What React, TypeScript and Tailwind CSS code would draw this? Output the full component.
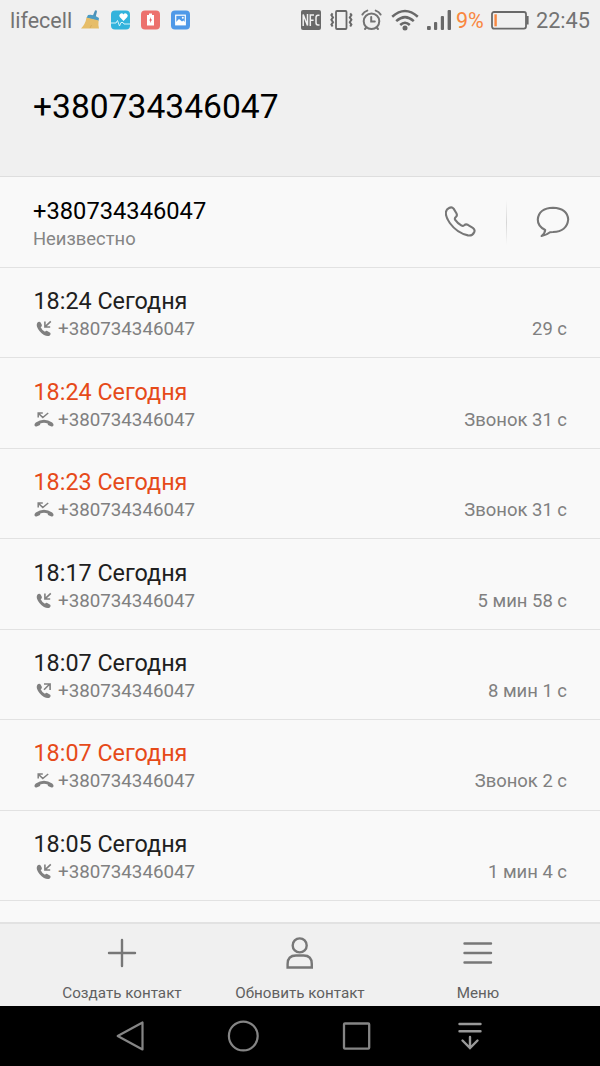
import type { ReactNode } from 'react';

type CallType = 'in' | 'out' | 'missed';

type Call = {
  time: string;
  type: CallType;
  duration: string;
};

const phone = '+380734346047';

const calls: Call[] = [
  { time: '18:24', type: 'in', duration: '29 с' },
  { time: '18:24', type: 'missed', duration: 'Звонок 31 с' },
  { time: '18:23', type: 'missed', duration: 'Звонок 31 с' },
  { time: '18:17', type: 'in', duration: '5 мин 58 с' },
  { time: '18:07', type: 'out', duration: '8 мин 1 с' },
  { time: '18:07', type: 'missed', duration: 'Звонок 2 с' },
  { time: '18:05', type: 'in', duration: '1 мин 4 с' },
];

function StatusBar() {
  return (
    <div className="flex h-10 items-center justify-between pl-[10px] pr-[10px] text-[#737373]">
      <div className="flex items-center">
        <span className="w-[70px] pt-px text-[21.5px] leading-10">lifecell</span>
        {/* broom */}
        <svg className="mr-[10px]" width="21" height="22" viewBox="0 0 21 22">
          <path d="M12.5 7.5 L15 1.5 Q16.5 0.5 17 2.5 L15.5 8.5Z" fill="#4a90b8" />
          <path d="M8 6 Q13 4.5 19 9 L18.5 12 L6.5 9Z" fill="#4b9cc4" />
          <path d="M6.5 8.5 L18.6 11.5 Q18 16 19 19.5 L1 19.5 Q5.5 15 6.5 8.5Z" fill="#e6bd68" />
          <path d="M10 19 L11.5 16" stroke="#d6ac5c" strokeWidth="1" />
        </svg>
        <svg className="mr-[11px]" width="19" height="20" viewBox="0 0 19 20">
          <rect y="0.5" width="19" height="19" rx="4" fill="#32b3dc" />
          <path d="M12.5 11 L8.7 7 A2.2 2.2 0 0 1 12.5 4.5 A2.2 2.2 0 0 1 16.3 7Z" fill="#fff" />
          <path d="M0 13 H5 L6.5 10.5 L8.5 16 L10 12.5 H12 L13 14 H19" fill="none" stroke="#d7f4fb" strokeWidth="1" />
        </svg>
        <svg className="mr-[11px]" width="19" height="20" viewBox="0 0 19 20">
          <rect y="0.5" width="19" height="19" rx="4" fill="#ec716d" />
          <path d="M8 3.5 H11 V5 H13 V15.5 H6 V5 H8Z" fill="#fff" />
          <path d="M10 7 L8.3 10.5 H9.4 L9 13 L11 9.5 H9.8Z" fill="#d94f50" />
        </svg>
        <svg width="19" height="20" viewBox="0 0 19 20">
          <rect y="0.5" width="19" height="19" rx="4" fill="#4f99e8" />
          <rect x="4.7" y="5.2" width="9.6" height="9.6" fill="none" stroke="#fff" strokeWidth="1.2" />
          <path d="M5 12 L8 9 L11 11.5 L12.5 10.5 L14 12 V15 H5Z" fill="#fff" />
          <circle cx="11.8" cy="7.8" r="1" fill="#fff" />
        </svg>
      </div>
      <div className="flex items-center">
        <svg className="mr-[9px]" width="20" height="20" viewBox="0 0 20 20">
          <rect width="20" height="20" rx="2" fill="#696969" />
          <path d="M2.2 16 V4.5 L6.5 15.5 V4 M9.3 16 V5 H13 M9.3 10.2 H12.6 M18.5 5.2 H17 Q15 5.2 15 7.5 V12.5 Q15 15 17 15 H18.5" fill="none" stroke="#f0f0f0" strokeWidth="1.5" />
        </svg>
        {/* vibration */}
        <svg className="mr-[8px]" width="23" height="20" viewBox="0 0 23 20">
          <rect x="6" y="1" width="10.5" height="18" rx="1" fill="none" stroke="#696969" strokeWidth="1.8" />
          <path d="M2.6 3.4 L1.4 5 L3 7.4 L1.4 9.8 L3 12.2 L1.4 14.6 L2.6 16.6 M20.2 3.4 L21.4 5 L19.8 7.4 L21.4 9.8 L19.8 12.2 L21.4 14.6 L20.2 16.6" fill="none" stroke="#696969" strokeWidth="2" />
        </svg>
        {/* alarm */}
        <svg className="mr-[9px]" width="21" height="22" viewBox="0 0 21 22" fill="none" stroke="#737373" strokeWidth="2" strokeLinecap="round">
          <circle cx="10.5" cy="12.2" r="7.8" />
          <path d="M1.4 5.5 Q3 2.6 6.3 1.6 M19.6 5.5 Q18 2.6 14.7 1.6 M10.2 8 V12.6 H13.8" />
          <path d="M5.3 18.5 L4 20 M15.7 18.5 L17 20" />
        </svg>
        <svg className="mr-[8px]" width="28" height="22" viewBox="0 0 28 22">
          <path d="M1.2 7.7 Q14 -3.7 26.8 7.7 M5.2 12.2 Q14 4 22.8 12.2 M9.2 16 Q14 11.4 18.8 16" fill="none" stroke="#696969" strokeWidth="2.5" />
          <circle cx="14" cy="18.9" r="2.5" fill="#696969" />
        </svg>
        <svg className="mr-[5px]" width="24" height="20" viewBox="0 0 24 20" fill="#696969">
          <rect x="0" y="16" width="3.8" height="4" rx="1" />
          <rect x="7" y="12" width="3.2" height="8" rx="1" />
          <rect x="13.8" y="6" width="3.2" height="14" rx="1" />
          <rect x="20.6" y="0" width="3.4" height="20" rx="1" />
        </svg>
        <span className="w-[35px] pt-px text-[21.5px] leading-10 text-[#f9873f]">9%</span>
        <svg className="mr-[7px]" width="38" height="19" viewBox="0 0 38 19">
          <rect x="1" y="1" width="34" height="16.6" rx="2" fill="none" stroke="#696969" strokeWidth="1.8" />
          <path d="M36.5 5 V13.5" stroke="#696969" strokeWidth="2.2" />
          <rect x="3.4" y="3.3" width="2.4" height="12" fill="#f9873f" />
        </svg>
        <span className="pt-px text-[21.7px] leading-10">22:45</span>
      </div>
    </div>
  );
}

function CallIcon({ type }: { type: CallType }) {
  if (type === 'missed') {
    return (
      <svg width="20" height="18" viewBox="0 0 20 18" fill="none" stroke="#808080">
        <path d="M4.2 6.6 V2.1 H8.8 M4.5 2.4 L8.8 6.6 L14.2 2" strokeWidth="1.5" />
        <path d="M0.7 14.8 Q-0.1 13.2 1.8 11.6 Q10 6 18.2 11.6 Q20.1 13.2 19.3 14.8 Q18.7 15.8 17.5 15.4 L14.5 14.3 Q13.7 13.8 13.7 12.4 Q10 11.3 6.3 12.4 Q6.3 13.8 5.5 14.3 L2.5 15.4 Q1.3 15.8 0.7 14.8Z" fill="#808080" stroke="none" />
      </svg>
    );
  }
  return (
    <svg width="20" height="18" viewBox="0 0 20 18">
      <path d="M4.2 1.9 Q5.8 1.1 6.8 2.7 L7.9 4.9 Q8.2 6.2 6.7 7.2 Q8 10.2 11 11.8 Q12 10.4 13.2 10.9 L16.2 12.7 Q17.4 14 15.8 15.4 Q13.6 16.8 10 14.9 Q4.8 11.8 3 6.8 Q2.1 3.2 4.2 1.9Z" fill="#808080" />
      {type === 'in' ? (
        <path d="M16.8 1.3 L11.2 6.6 M10.9 1.6 V7 H16.2" fill="none" stroke="#808080" strokeWidth="1.6" />
      ) : (
        <path d="M10 7.7 L15.8 2 M10 2 H16.1 V8" fill="none" stroke="#808080" strokeWidth="1.6" />
      )}
    </svg>
  );
}

function CallRow({ call }: { call: Call }) {
  return (
    <div className="flex h-[90.45px] justify-between border-b border-[#e2e2e2] pl-[33.5px] pr-[33px]">
      <div className="pt-[17.3px]">
        <div className={`text-[23.35px] leading-8 ${call.type === 'missed' ? 'text-[#e64a19]' : 'text-[#202020]'}`}>
          {call.time} Сегодня
        </div>
        <div className="flex items-center gap-[4.5px] text-[18.75px] leading-6 text-[#808080]">
          <CallIcon type={call.type} />
          <span>{phone}</span>
        </div>
      </div>
      <div className="pt-[49.3px] text-[18.45px] leading-6 text-[#808080]">{call.duration}</div>
    </div>
  );
}

function Action({ label, children }: { label: string; children: ReactNode }) {
  return (
    <button className="flex w-[178px] flex-col items-center pt-[12px]">
      <svg width="34" height="34" viewBox="0 0 34 34" fill="none" stroke="#777" strokeWidth="2.4" strokeLinecap="round">
        {children}
      </svg>
      <span className="mt-[13px] text-[15.2px] leading-5 text-[#606060]">{label}</span>
    </button>
  );
}

function App() {
  return (
    <div className="flex h-[1066px] w-[600px] flex-col overflow-hidden bg-[#f9f9f9] font-[Roboto,sans-serif]">
      <header className="h-[177px] shrink-0 border-b border-[#dedede] bg-[#f0f0f0]">
        <StatusBar />
        <h1 className="pl-[33px] pt-[47px] text-[33.6px] leading-10 text-black">{phone}</h1>
      </header>

      <main className="min-h-0 flex-1 overflow-hidden">
        <div className="flex h-[91px] justify-between border-b border-[#e2e2e2] pl-[33px] pr-[30px]">
          <div className="pt-[18px]">
            <div className="text-[23.7px] leading-8 text-black">{phone}</div>
            <div className="text-[18.4px] leading-6 text-[#858585]">Неизвестно</div>
          </div>
          <div className="flex items-center">
            <svg width="32" height="32" viewBox="0 0 32 32" fill="none" stroke="#777" strokeWidth="2.1" strokeLinejoin="round">
              <path d="M4 2 Q6.8 0.4 8.6 2.6 L11.4 7.2 Q12.6 9.4 11 10.8 Q9.4 12 10 13.6 Q12.3 17 16.6 19.6 Q18 20.2 19.2 19.2 Q20.8 17.8 22.8 18.8 L27.8 21.8 Q30.4 23.6 29.2 26.2 Q27.4 30 23 29.4 Q12 27 4.8 17 Q0.8 11.2 0.8 6.8 Q1 3.4 4 2Z" />
            </svg>
            <div className="ml-[29.5px] mr-[29px] h-[45px] w-px bg-linear-to-b from-transparent via-[#d6d6d6] to-transparent" />
            <svg width="34" height="32" viewBox="0 0 34 32" fill="none" stroke="#777" strokeWidth="2.1" strokeLinejoin="round">
              <path d="M9.2 24 Q1.6 20.2 1.8 13.5 Q2.8 2.2 17 1.8 Q31.4 2.4 32.2 13.5 Q31 25.6 17 26 Q15.4 26 14 26.2 Q10.6 29 5.6 30 Q9 27.2 9.2 24Z" />
            </svg>
          </div>
        </div>
        {calls.map((call, index) => (
          <CallRow call={call} key={index} />
        ))}
      </main>

      <footer className="flex h-[84px] shrink-0 justify-center border-t-2 border-[#e2e2e2] bg-[#f0f0f0]">
        <Action label="Создать контакт">
          <path d="M17 4 V30 M4 17 H30" />
        </Action>
        <Action label="Обновить контакт">
          <circle cx="16.7" cy="9.4" r="7" />
          <path d="M4.6 31.5 V28 Q4.6 19.5 13 19.5 H20.6 Q28.8 19.5 28.8 28 V31.5Z" />
        </Action>
        <Action label="Меню">
          <path d="M3.5 7.5 H30 M3.5 17 H30 M3.5 26.5 H30" />
        </Action>
      </footer>

      <nav className="flex h-[60px] shrink-0 items-center bg-black pl-[114px]">
        <svg className="mr-[81px]" width="32" height="32" viewBox="0 0 32 32" fill="none" stroke="#858585" strokeWidth="2.2" strokeLinejoin="round">
          <path d="M28.5 2.5 V29.5 L3.7 16Z" />
        </svg>
        <svg className="mr-[81px]" width="32" height="32" viewBox="0 0 32 32" fill="none" stroke="#858585" strokeWidth="2.2">
          <circle cx="16.3" cy="16" r="14.4" />
        </svg>
        <svg className="mr-[82px]" width="32" height="32" viewBox="0 0 32 32" fill="none" stroke="#858585" strokeWidth="2.3">
          <rect x="4" y="3.5" width="25.2" height="25.2" rx="1" />
        </svg>
        <svg width="32" height="32" viewBox="0 0 32 32" fill="none" stroke="#999" strokeWidth="2.4" strokeLinecap="round">
          <path d="M5.5 4 H26.5 M5.5 11.2 H26.5 M16 17 V27.5 M8.5 20.5 L16 28 L23.5 20.5" />
        </svg>
      </nav>
    </div>
  );
}

export default App;
